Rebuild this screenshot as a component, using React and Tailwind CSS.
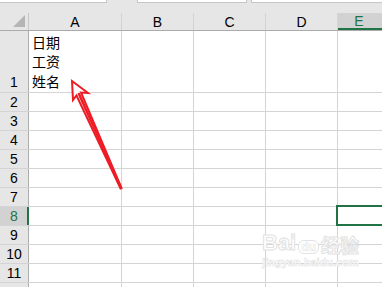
import React from 'react';

const cols = [
  { key: 'A', w: 'w-[93px]' },
  { key: 'B', w: 'w-[72px]' },
  { key: 'C', w: 'w-[72px]' },
  { key: 'D', w: 'w-[72px]' },
];

const rows = [2, 3, 4, 5, 6, 7, 8, 9, 10, 11, 12];

const font = { fontFamily: '"Liberation Sans", "Noto Sans CJK SC", sans-serif' };

const Cell = ({ w, children, className = '' }) => (
  <div className={`${w} shrink-0 h-full border-r border-[#d4d4d4] ${className}`}>{children}</div>
);

const App = () => {
  return (
    <div className="relative w-[382px] h-[287px] overflow-hidden bg-white text-black" style={font}>
      {/* Top bar */}
      <div className="h-[13px] bg-[#e6e6e6] flex items-start">
        <div className="w-[107px] h-[3px] bg-white border-r border-b border-[#c6c6c6]" />
        <div className="w-[30px]" />
        <div className="w-[110px] h-[3px] bg-white border-x border-b border-[#c6c6c6]" />
        <div className="w-[4px]" />
        <div className="flex-1 h-[3px] bg-white border-l border-b border-[#c6c6c6]" />
      </div>

      {/* Column header */}
      <div className="h-[18px] flex bg-[#e6e6e6] border-b border-[#ababab]">
        <div className="relative w-[29px] shrink-0 h-full border-r border-[#c8c8c8]">
          <div className="absolute right-[3px] bottom-[3px] w-0 h-0 border-l-[12px] border-l-transparent border-b-[12px] border-b-[#b5b5b5]" />
        </div>
        {cols.map((c) => (
          <Cell key={c.key} w={c.w} className="flex items-center justify-center text-[14px] leading-none border-[#d0d0d0]">
            {c.key}
          </Cell>
        ))}
        <div className="flex-1 h-full bg-[#d2d2d2] border-b-2 border-[#217346] flex items-center justify-center pr-[2px] text-[14px] leading-none text-[#217346]">
          E
        </div>
      </div>

      {/* Row 1 */}
      <div className="h-[62px] flex border-b border-[#d4d4d4]">
        <div className="w-[29px] shrink-0 h-full bg-[#e6e6e6] border-r border-[#ababab] flex items-end justify-center pb-[1px] text-[14px] leading-[17px]">
          1
        </div>
        <Cell w="w-[93px]" className="flex flex-col justify-end pl-[3px] pb-[1px] text-[14px] leading-[19.5px]">
          <span style={{ fontFamily: '"Noto Sans CJK SC", sans-serif' }}>日期</span>
          <span style={{ fontFamily: '"Noto Sans CJK SC", sans-serif' }}>工资</span>
          <span style={{ fontFamily: '"Noto Sans CJK SC", sans-serif' }}>姓名</span>
        </Cell>
        <Cell w="w-[72px]" />
        <Cell w="w-[72px]" />
        <Cell w="w-[72px]" />
        <div className="flex-1" />
      </div>

      {/* Rows 2.. */}
      {rows.map((r) => {
        const sel = r === 8;
        return (
          <div key={r} className="h-[19px] flex border-b border-[#d4d4d4]">
            <div
              className={
                sel
                  ? 'w-[29px] shrink-0 h-full bg-[#d2d2d2] border-r-2 border-[#217346] flex items-center justify-center pl-[1px] text-[14px] leading-none text-[#217346]'
                  : 'w-[29px] shrink-0 h-full bg-[#e6e6e6] border-r border-[#ababab] flex items-center justify-center text-[14px] leading-none'
              }
            >
              {r < 12 ? r : ''}
            </div>
            <Cell w="w-[93px]" />
            <Cell w="w-[72px]" />
            <Cell w="w-[72px]" />
            <Cell w="w-[72px]" />
            <div className="relative flex-1">
              {sel && <div className="absolute -left-[2px] -top-[2px] -right-[2px] -bottom-[1px] border-2 border-[#217346]" />}
            </div>
          </div>
        );
      })}

      {/* Watermark */}
      <div className="absolute left-[262px] top-[232px] flex flex-col items-center text-white pointer-events-none">
        <div className="flex items-end gap-[2px] text-[22px] font-bold leading-none [-webkit-text-stroke:1px_#e2e2e2]">
          <span>Bai</span>
          <span className="text-[12px] px-[2px] rounded-[6px] bg-white border border-[#e2e2e2] [-webkit-text-stroke:0.5px_#e2e2e2]">du</span>
          <span className="text-[19px]" style={{ fontFamily: '"Noto Sans CJK SC", sans-serif' }}>经验</span>
        </div>
        <div className="text-[11px] leading-none mt-[3px] font-bold [-webkit-text-stroke:0.6px_#e4e4e4]">jingyan.baidu.com</div>
      </div>

      {/* Red arrow */}
      <svg className="absolute left-0 top-0 pointer-events-none" width="382" height="287">
        <polygon
          points="72,81 88,93 81,92.5 121.5,188 120.5,188.5 76.5,95.5 73,100"
          fill="white"
          stroke="#ee1c25"
          strokeWidth="2"
          strokeLinejoin="miter"
        />
        <line x1="79" y1="94" x2="121" y2="188" stroke="#ee1c25" strokeWidth="2.5" strokeLinecap="round" />
      </svg>
    </div>
  );
};

export default App;
